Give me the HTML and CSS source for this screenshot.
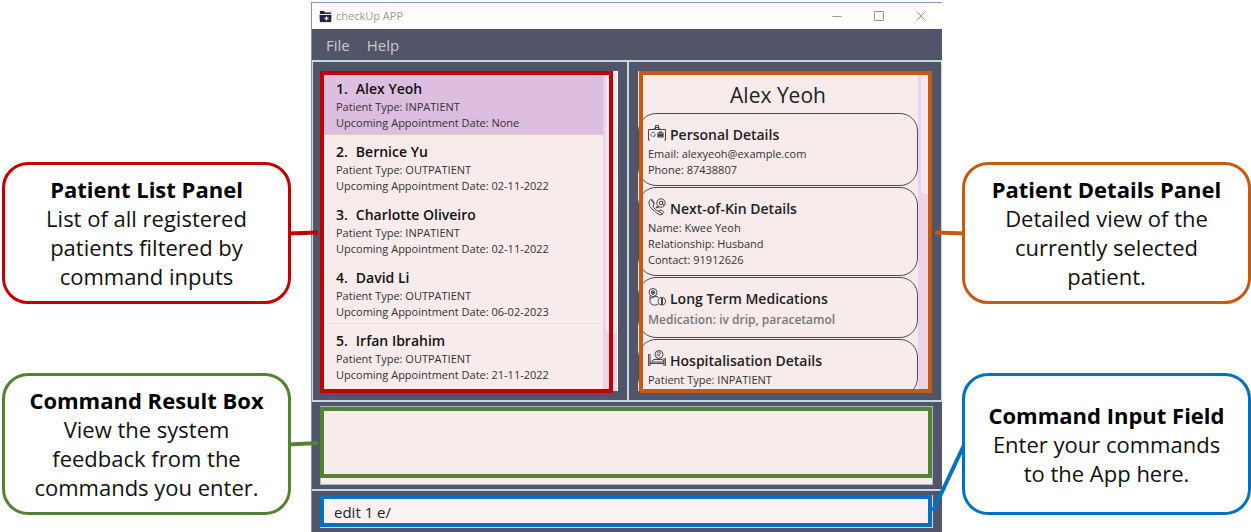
FILE: index.html
```html
<!DOCTYPE html>
<html lang="en">
<head>
<meta charset="utf-8">
<title>checkUp APP</title>
<link rel="stylesheet" href="styles.css">
</head>
<body>
<main class="guide">
  <div class="notes notes-left">
    <section class="note red">
      <h2>Patient List Panel</h2>
      <p>List of all registered<br>patients filtered by<br>command inputs</p>
      <svg class="link link-right" width="32" height="8" viewBox="0 0 32 8"><path d="M0 4.500 30 3.500"/></svg>
    </section>
    <section class="note green">
      <h2>Command Result Box</h2>
      <p>View the system<br>feedback from the<br>commands you enter.</p>
      <svg class="link link-right" width="32" height="8" viewBox="0 0 32 8"><path d="M0 4.500 30 3"/></svg>
    </section>
  </div>

  <div class="app">
    <header class="titlebar">
      <svg class="logo" width="13" height="13" viewBox="0 0 13 13"><path fill="#f5e6e6" d="M0 0h13v13H0z"/><path fill="#20243c" d="M1 1h4l1 1.500h6V4H1zM.5 5h12l-.5 7H1z"/><path d="M7.500 6.500v4M5.500 8.500h4" stroke="#fff" stroke-width="1.300"/></svg>
      <span class="app-name">checkUp APP</span>
      <button class="win" aria-label="Minimize"><svg width="10" height="10" viewBox="0 0 10 10"><path d="M.5 5.500h9"/></svg></button>
      <button class="win" aria-label="Maximize"><svg width="10" height="10" viewBox="0 0 10 10"><path d="M.5.5h9v9h-9z"/></svg></button>
      <button class="win" aria-label="Close"><svg width="10" height="10" viewBox="0 0 10 10"><path d="m.5.5 9 9m0-9-9 9"/></svg></button>
    </header>
    <nav class="menu"><button>File</button><button>Help</button></nav>

    <div class="split">
      <div class="pane">
        <div class="panel list-panel">
          <ol class="patients">
            <li class="selected"><h3><span>1.</span>Alex Yeoh</h3><p>Patient Type: INPATIENT</p><p>Upcoming Appointment Date: None</p></li>
            <li><h3><span>2.</span>Bernice Yu</h3><p>Patient Type: OUTPATIENT</p><p>Upcoming Appointment Date: 02-11-2022</p></li>
            <li><h3><span>3.</span>Charlotte Oliveiro</h3><p>Patient Type: INPATIENT</p><p>Upcoming Appointment Date: 02-11-2022</p></li>
            <li class="ruled"><h3><span>4.</span>David Li</h3><p>Patient Type: OUTPATIENT</p><p>Upcoming Appointment Date: 06-02-2023</p></li>
            <li><h3><span>5.</span>Irfan Ibrahim</h3><p>Patient Type: OUTPATIENT</p><p>Upcoming Appointment Date: 21-11-2022</p></li>
          </ol>
          <div class="track"><div class="thumb thumb-list"></div></div>
        </div>
        <div class="frame frame-list"></div>
      </div>
      <div class="pane">
        <div class="panel detail-panel">
          <div class="details">
            <h1>Alex Yeoh</h1>
            <section class="card">
              <h3><svg class="icon" width="18" height="18" viewBox="0 0 18 18"><path d="M2 16H.5V5.500H6m6 0h5.500V16H16M5.500 5.500 7 3.500h4l1.500 2zM7.500 3.500V1.500h3v2M7 5l2-2 2 2"/><circle cx="5" cy="10.500" r="2.200" stroke-dasharray="3 1"/><path d="M10 9h5v4h-5zm0 1.500h5m-5 1.200h5M11 8h3" stroke-width="1.200"/></svg>Personal Details</h3>
              <p>Email: alexyeoh@example.com</p><p>Phone: 87438807</p>
            </section>
            <section class="card">
              <h3><svg class="icon" width="18" height="18" viewBox="0 0 18 18"><path d="M2 2c-2 2-1 6 2 9s7 6 9 6l2.500-2c1-1-2-3.500-3.500-3l-1.500 1.500C8 12.500 5.500 10 5 8l1-2C6.500 4 4 0 2 2zM3 1.500 6 6m4.500 7 4 3"/><circle cx="13" cy="5" r="4.200"/><circle cx="13" cy="5" r="1.700"/><path d="M14.700 3v3.500l1.300.5M9.500 8 8 10l3-1"/></svg>Next-of-Kin Details</h3>
              <p>Name: Kwee Yeoh</p><p>Relationship: Husband</p><p>Contact: 91912626</p>
            </section>
            <section class="card">
              <h3><svg class="icon" width="18" height="18" viewBox="0 0 18 18"><circle cx="5" cy="4.500" r="4"/><circle cx="5" cy="4.500" r="1.800"/><path d="M5 3v3M3.500 4.500h3M2 8v5c0 4.500 6 5 8 3M2 10c2 1 4-2 7-1.500l1.500 1"/><path d="M13.500 9.500c-4.500 0-4.500 7.500 0 7.500zm1 0c4 0 4 7.500 0 7.500z"/></svg>Long Term Medications</h3>
              <p class="muted">Medication: iv drip, paracetamol</p>
            </section>
            <section class="card">
              <h3><svg class="icon" width="18" height="18" viewBox="0 0 18 18"><path d="M.6 4v12M2 4v12M16 8v8m1.400-8v8M2 13.500h14M2 12h14M4 11l2-1.500h8l2 1.500"/><circle cx="11" cy="4.500" r="4"/><path d="M9.500 3.500c0-2 3-2 3 0L11 5v1.500M8.500 5h2"/></svg>Hospitalisation Details</h3>
              <p>Patient Type: INPATIENT</p>
            </section>
          </div>
          <div class="track"><div class="thumb thumb-detail"></div></div>
        </div>
        <div class="frame frame-detail"></div>
      </div>
    </div>

    <div class="result-pane">
      <output class="result" aria-label="Command result"></output>
      <div class="frame frame-result"></div>
    </div>
    <div class="command-pane">
      <input class="command" type="text" aria-label="Command" value="edit 1 e/">
      <div class="frame frame-command"></div>
    </div>
  </div>

  <div class="notes notes-right">
    <section class="note orange">
      <h2>Patient Details Panel</h2>
      <p>Detailed view of the<br>currently selected<br>patient.</p>
      <svg class="link link-left" width="32" height="8" viewBox="0 0 32 8"><path d="M2 3.500 32 4.500"/></svg>
    </section>
    <section class="note blue">
      <h2>Command Input Field</h2>
      <p>Enter your commands<br>to the App here.</p>
      <svg class="link link-down" width="34" height="70" viewBox="0 0 34 70"><path d="M33 1 2 67"/></svg>
    </section>
  </div>
</main>
</body>
</html>
```
FILE: styles.css
```css
* { box-sizing: border-box; }
body, h1, h2, h3, p, ol { margin: 0; padding: 0; }
body { background: #fff; font-family: "Open Sans", "Noto Sans", sans-serif; overflow: hidden; }
button, input { font: inherit; border: 0; margin: 0; }

.guide { display: grid; grid-template-columns: 311fr 631fr 309fr; min-height: 100vh; }

.notes { display: flex; flex-direction: column; gap: 69px; padding-top: 162px; }
.notes-left { padding-left: 2px; padding-right: 20px; }
.notes-right { padding-left: 20px; }
.note {
  position: relative; z-index: 2;
  display: flex; flex-direction: column; justify-content: center;
  min-height: 142px; padding: 0 8px;
  border: 3px solid currentColor; border-radius: 26px;
  font-size: 22px; line-height: 29px; text-align: center; white-space: nowrap;
}
.note h2 { color: #000; font-size: 22px; font-weight: 700; }
.note p { color: #111; }
.red { color: #c00000; }
.green { color: #548235; }
.orange { color: #c55a11; }
.blue { color: #0070c0; }
.link { position: absolute; fill: none; stroke: currentColor; stroke-width: 4; }
.link-right { left: 100%; top: 64px; }
.link-left { right: 100%; top: 64px; }
.link-down { right: 100%; top: 68px; }

.app {
  display: flex; flex-direction: column; min-width: 0; margin-top: 2px;
  background: #52546a; border-left: 1px solid #7f93ab;
}
.titlebar {
  display: flex; align-items: center; height: 27px; padding-left: 7px;
  background: #fff; border-top: 1px solid #7f9bbd;
}
.app-name { flex: 1; margin-left: 4px; font-size: 11px; line-height: 16px; color: #999; }
.win { display: grid; place-items: center; width: 42px; height: 24px; padding: 0; background: none; }
.win svg { fill: none; stroke: #999; }
.menu { display: flex; gap: 17px; height: 31px; padding-left: 14px; }
.menu button { padding: 0; background: none; color: #c9cad2; font-size: 15px; line-height: 30px; }

.split { display: grid; grid-template-columns: 1fr 1fr; border: 2px solid #c4d9dc; border-width: 2px 1px; }
.pane { position: relative; height: 338px; padding: 9px 9px 9px 7px; }
.pane + .pane { border-left: 2px solid #c4d9dc; padding-left: 9px; padding-right: 9px; }
.panel { display: flex; height: 320px; overflow: hidden; background: #f7ebeb; color: #333; font-size: 11px; line-height: 16px; }
.list-panel { padding-top: 1px; border-right: 1px solid #fff; }
.patients { flex: 1; list-style: none; }
.patients li { height: 63px; padding: 6px 0 4px 16px; white-space: nowrap; }
.patients .selected { background: #ddbde0; border-bottom: 1px solid #edc7b4; }
.patients .ruled { border-bottom: 1px solid #e2e2e4; }
.patients h3 { display: flex; gap: 8px; font-size: 14px; line-height: 21px; font-weight: 600; color: #111; }
.track { flex: none; width: 14px; background: #e9d5e5; padding-left: 3px; }
.thumb { background: #f4e9f1; border-radius: 3px; }
.thumb-list { height: 261px; }
.thumb-detail { height: 118px; margin-top: 5px; }

.details { flex: 1; min-width: 0; }
.details h1 { height: 42px; padding-top: 9px; font-size: 21px; line-height: 30px; font-weight: 400; text-align: center; color: #222; }
.card { margin-bottom: 1px; padding: 9px 9px 7px; border: 1px solid #4b4b4b; border-radius: 18px; white-space: nowrap; }
.card h3 { display: flex; align-items: center; gap: 4px; font-size: 14px; line-height: 23px; font-weight: 600; color: #222; }
.card .muted { font-size: 12px; line-height: 20px; font-weight: 600; color: #777; }
.icon { fill: none; stroke: #444; margin-top: -4px; }

.frame { position: absolute; z-index: 1; border: 4px solid; pointer-events: none; }
.frame-list { inset: 9px 14px 7px 7px; border-color: #c00000; }
.frame-detail { inset: 9px 9px 7px 10px; border-color: #c55a11; }
.frame-result { inset: 5px 10px 11px 8px; border-color: #548235; }
.frame-command { inset: 4px 10px 5px 8px; border-color: #0070c0; }

.result-pane { position: relative; height: 87px; padding: 4px 9px 4px 8px; }
.result { display: block; height: 79px; background: #f7ebeb; border: 1px solid #a9bac4; }
.command-pane { position: relative; flex: 1; min-height: 43px; padding: 4px 9px 4px 8px; border-top: 2px solid #c4d9dc; }
.command { display: block; width: 100%; height: 33px; padding: 0 13px; background: #faf1f2; color: #222; font-size: 15px; border: 1px solid #c4d9dc; }
```
